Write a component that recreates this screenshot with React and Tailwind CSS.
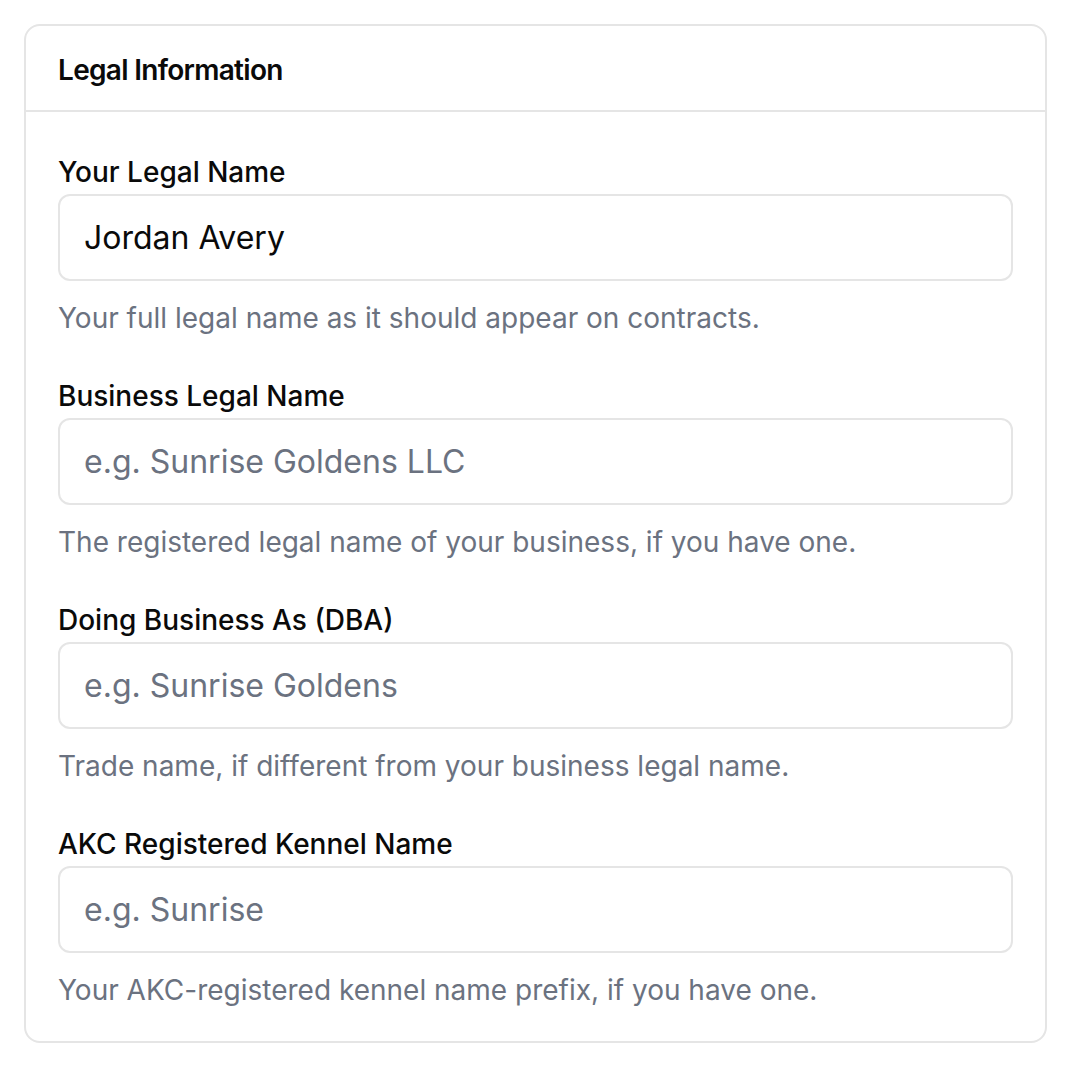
import React from "react";

const fields = [
  {
    label: "Your Legal Name",
    value: "Jordan Avery",
    placeholder: "",
    help: "Your full legal name as it should appear on contracts.",
  },
  {
    label: "Business Legal Name",
    value: "",
    placeholder: "e.g. Sunrise Goldens LLC",
    help: "The registered legal name of your business, if you have one.",
  },
  {
    label: "Doing Business As (DBA)",
    value: "",
    placeholder: "e.g. Sunrise Goldens",
    help: "Trade name, if different from your business legal name.",
  },
  {
    label: "AKC Registered Kennel Name",
    value: "",
    placeholder: "e.g. Sunrise",
    help: "Your AKC-registered kennel name prefix, if you have one.",
  },
];

const App = () => {
  return (
    <div className="min-h-screen bg-white p-6 font-['Inter',sans-serif] text-[#0a0a0a]">
      <div className="w-[1023px] rounded-2xl border-2 border-[#e5e5e5]">
        <div className="flex h-[86px] items-center border-b-2 border-[#e5e5e5] px-[32px] pt-1">
          <h3 className="text-[28px] font-semibold tracking-[-0.7px]">Legal Information</h3>
        </div>
        <div className="flex flex-col gap-[42px] px-[32px] pt-[42px] pb-[33px]">
          {fields.map((f, i) => (
            <div key={i} className="flex flex-col">
              <label className="text-[28px] font-medium leading-[36px]">{f.label}</label>
              <input
                className="mt-[4px] h-[87px] w-full rounded-xl border-2 border-[#e5e5e5] px-6 text-[32px] text-[#0a0a0a] outline-none placeholder:text-[#6b7280]"
                defaultValue={f.value}
                placeholder={f.placeholder}
              />
              <p className="mt-[19px] text-[28px] leading-[36px] text-[#6b7280]">{f.help}</p>
            </div>
          ))}
        </div>
      </div>
    </div>
  );
};

export default App;
